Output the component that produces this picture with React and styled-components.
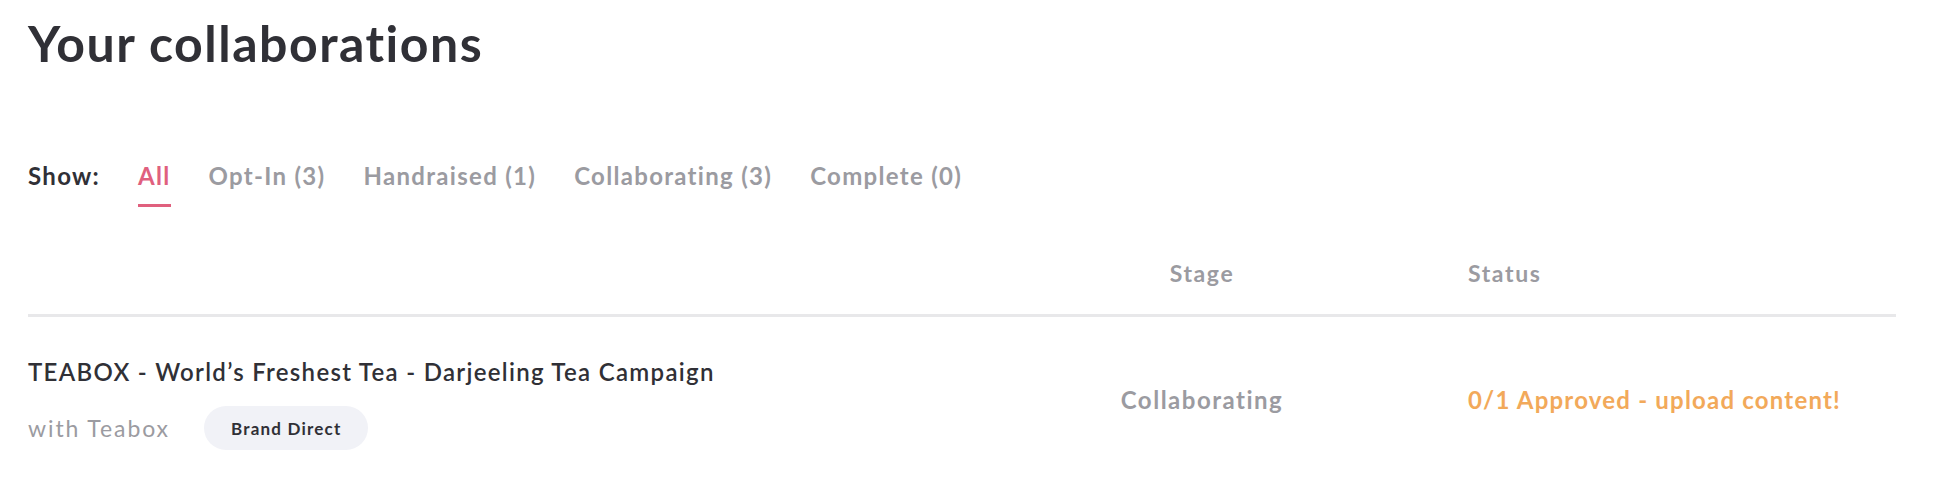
import React from "react";
import styled, { createGlobalStyle } from "styled-components";

const GlobalStyle = createGlobalStyle`
  body {
    margin: 0;
    background: #ffffff;
    font-family: "Lato", "Noto Sans", sans-serif;
  }
`;

const tabs = [
  { label: "All", active: true },
  { label: "Opt-In (3)" },
  { label: "Handraised (1)" },
  { label: "Collaborating (3)" },
  { label: "Complete (0)" },
];

const App = () => {
  return (
    <Page>
      <GlobalStyle />
      <Title>Your collaborations</Title>

      <Filters>
        <ShowLabel>Show:</ShowLabel>
        {tabs.map((t) => (
          <Tab key={t.label} $active={t.active}>
            {t.label}
          </Tab>
        ))}
      </Filters>

      <Table>
        <HeaderRow>
          <span />
          <HeadCell $center>Stage</HeadCell>
          <HeadCell>Status</HeadCell>
        </HeaderRow>

        <Row>
          <Campaign>
            <CampaignName>TEABOX - World’s Freshest Tea - Darjeeling Tea Campaign</CampaignName>
            <Meta>
              <Brand>with Teabox</Brand>
              <Badge>Brand Direct</Badge>
            </Meta>
          </Campaign>
          <Stage>Collaborating</Stage>
          <Status>0/1 Approved - upload content!</Status>
        </Row>
      </Table>
    </Page>
  );
};

const Page = styled.div`
  padding: 0 40px 0 28px;
  color: #303036;
`;

const Title = styled.h1`
  margin: 0;
  padding-top: 14px;
  font-size: 50px;
  line-height: 58px;
  font-weight: 700;
  color: #303036;
  letter-spacing: 1.5px;
`;

const Filters = styled.nav`
  display: flex;
  align-items: flex-start;
  gap: 38px;
  margin-top: 90px;
  font-size: 24px;
  line-height: 28px;
  font-weight: 700;
  letter-spacing: 1.3px;
`;

const ShowLabel = styled.span`
  color: #303036;
`;

const Tab = styled.a`
  color: ${(p) => (p.$active ? "#e0607e" : "#9b9ba1")};
  padding-bottom: 14px;
  border-bottom: 3px solid ${(p) => (p.$active ? "#e0607e" : "transparent")};
  cursor: pointer;
`;

const Table = styled.section`
  margin-top: 52px;
`;

const HeaderRow = styled.div`
  display: grid;
  grid-template-columns: 1fr 300px 428px;
  column-gap: 116px;
  padding-bottom: 27px;
  border-bottom: 3px solid #e8e8ea;
`;

const HeadCell = styled.span`
  font-size: 23px;
  line-height: 28px;
  font-weight: 700;
  letter-spacing: 1.6px;
  color: #9b9ba1;
  text-align: ${(p) => (p.$center ? "center" : "left")};
`;

const Row = styled.div`
  display: grid;
  grid-template-columns: 1fr 300px 428px;
  column-gap: 116px;
  align-items: center;
  padding: 40px 0 30px;
`;

const Campaign = styled.div`
  display: flex;
  flex-direction: column;
  gap: 20px;
`;

const CampaignName = styled.span`
  font-size: 24px;
  line-height: 29px;
  font-weight: 600;
  letter-spacing: 1.3px;
  color: #303036;
`;

const Meta = styled.div`
  display: flex;
  align-items: center;
  gap: 34px;
`;

const Brand = styled.span`
  font-size: 23px;
  line-height: 28px;
  letter-spacing: 1.9px;
  color: #9b9ba1;
`;

const Badge = styled.span`
  display: inline-flex;
  align-items: center;
  height: 44px;
  padding: 0 27px;
  border-radius: 22px;
  background: #f1f2f7;
  font-size: 17px;
  font-weight: 700;
  letter-spacing: 1.2px;
  color: #303036;
`;

const Stage = styled.span`
  padding-bottom: 8px;
  text-align: center;
  font-size: 24px;
  line-height: 28px;
  font-weight: 700;
  letter-spacing: 1.5px;
  color: #9b9ba1;
`;

const Status = styled.span`
  padding-bottom: 8px;
  font-size: 24px;
  line-height: 28px;
  font-weight: 700;
  letter-spacing: 1.2px;
  color: #f2a95a;
`;

export default App;
